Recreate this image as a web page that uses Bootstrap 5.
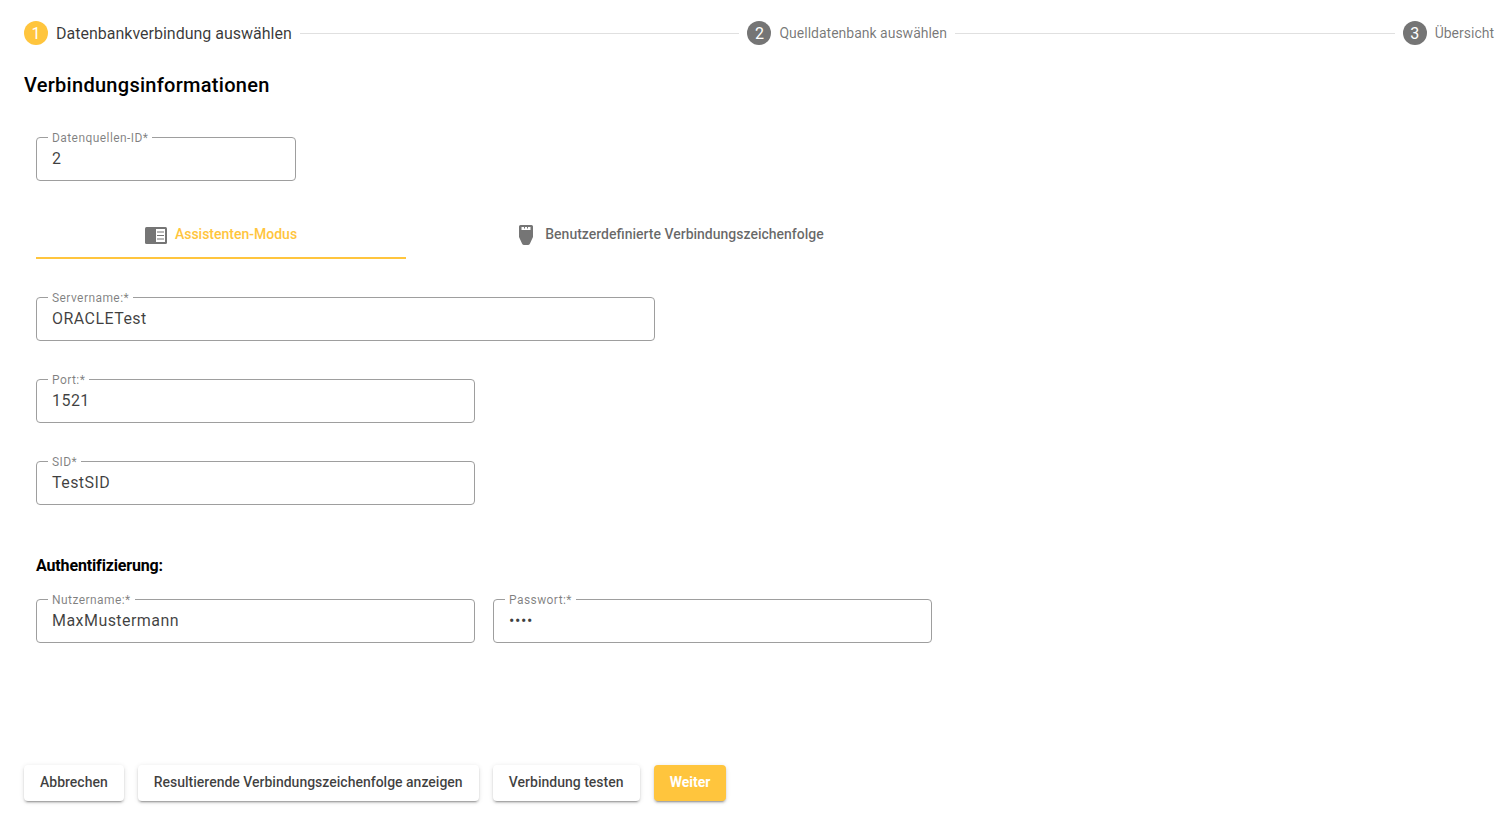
<!doctype html>
<html lang="de">
<head>
<meta charset="utf-8">
<title>Datenbankverbindung</title>
<link rel="stylesheet" href="https://cdn.jsdelivr.net/npm/bootstrap@5.3.0/dist/css/bootstrap.min.css">
<style>
html,body{height:100%;}
body{font-family:Roboto,"Liberation Sans",sans-serif;background:#fff;color:rgba(0,0,0,.87);font-size:14px;overflow:hidden;}
.app-shell{height:816px;padding:0 16px 15px 24px;}
.stepper{height:66px;}
.step-num{width:24px;height:24px;border-radius:50%;background:#757575;color:#fff;font-size:16px;line-height:25px;text-align:center;flex:none;}
.step-num-on{background:#ffc53d;}
.step-label{font-size:14px;color:rgba(0,0,0,.54);margin-left:8px;white-space:nowrap;}
.step-label-on{font-size:16px;line-height:24px;padding-top:1px;color:rgba(0,0,0,.78);}
.step-line{flex:1 1 auto;height:1px;background:rgba(0,0,0,.12);margin:0 8px;}
.sect-title{font-size:20px;font-weight:500;color:#000;line-height:24px;margin:7px 0 0;letter-spacing:.28px;}
.form-area{padding-left:12px;}
.field{position:relative;height:44px;border:1px solid #9e9e9e;border-radius:4px;padding:9px 15px 0;font-size:16px;line-height:24px;color:rgba(0,0,0,.75);letter-spacing:.45px;}
.field-label{position:absolute;top:-6px;left:11px;background:#fff;padding:0 4px;font-size:12px;line-height:13px;color:rgba(0,0,0,.5);letter-spacing:.43px;white-space:nowrap;}
.w-id{width:260px;margin-top:40px;}
.w-server{width:619px;margin-top:38px;}
.w-short{width:439px;}
.mt-gap{margin-top:38px;}
.tab-row{margin-top:27px;height:51px;}
.tab-item{width:370px;height:51px;font-size:14px;font-weight:500;color:rgba(0,0,0,.6);padding-top:2px;}
.tab-on{gap:8px;padding-top:4px;color:#ffc53d;border-bottom:2px solid #ffc53d;}
.tab-wide{width:530px;gap:12px;}
.doc-ico{margin-top:2px;}
.auth-title{font-size:16px;font-weight:700;color:#000;line-height:20px;margin:51px 0 0;letter-spacing:-.15px;}
.auth-row{margin-top:23px;gap:18px;}
.pw-dots{font-size:16px;letter-spacing:.6px;line-height:20px;}
.footer-bar{margin-top:122px;gap:14px;}
.act-btn{height:36px;padding:0 16px 1px;background:#fff;border:0;border-radius:4px;font-size:14px;font-weight:500;color:rgba(0,0,0,.75);box-shadow:0 3px 1px -2px rgba(0,0,0,.2),0 2px 2px 0 rgba(0,0,0,.14),0 1px 5px 0 rgba(0,0,0,.12);}
.act-test{width:147px;padding:0 0 1px;}
.act-primary{background:#ffc53d;color:#fff;font-weight:700;}
</style>
</head>
<body>
<div class="app-shell">
  <div class="stepper d-flex align-items-center">
    <div class="step-num step-num-on">1</div><div class="step-label step-label-on">Datenbankverbindung auswählen</div>
    <div class="step-line"></div>
    <div class="step-num">2</div><div class="step-label">Quelldatenbank auswählen</div>
    <div class="step-line"></div>
    <div class="step-num">3</div><div class="step-label">Übersicht</div>
  </div>
  <h2 class="sect-title">Verbindungsinformationen</h2>
  <div class="form-area">
    <div class="field w-id"><span class="field-label">Datenquellen-ID*</span>2</div>
    <div class="tab-row d-flex">
      <div class="tab-item tab-on d-flex align-items-center justify-content-center">
        <svg class="doc-ico" width="22" height="17" viewBox="0 0 22 17"><rect x="0" y="0" width="22" height="17" rx="1.500" fill="#757575"/><rect x="11" y="2" width="9" height="13" fill="#fff"/><path d="M12 5h7M12 8.500h7M12 12h7" stroke="#757575" stroke-width="1.200"/></svg>
        <span>Assistenten-Modus</span>
      </div>
      <div class="tab-item tab-wide d-flex align-items-center justify-content-center">
        <svg width="15" height="20" viewBox="-0.500 0 15 20"><path d="M2 0h11a1.500 1.500 0 0 1 1.500 1.500V12l-3 6.500a2 2 0 0 1-1.800 1.500H5.300a2 2 0 0 1-1.800-1.500L.5 12V1.500A1.500 1.500 0 0 1 2 0z" fill="#757575"/><path d="M3 2h9v3H3z" fill="#fff"/><path d="M6 2v1.500M9 2v1.500" stroke="#757575"/></svg>
        <span>Benutzerdefinierte Verbindungszeichenfolge</span>
      </div>
    </div>
    <div class="field w-server"><span class="field-label">Servername:*</span>ORACLETest</div>
    <div class="field w-short mt-gap"><span class="field-label">Port:*</span>1521</div>
    <div class="field w-short mt-gap"><span class="field-label">SID*</span>TestSID</div>
    <div class="auth-title">Authentifizierung:</div>
    <div class="auth-row d-flex">
      <div class="field w-short"><span class="field-label">Nutzername:*</span>MaxMustermann</div>
      <div class="field w-short"><span class="field-label">Passwort:*</span><span class="pw-dots">••••</span></div>
    </div>
  </div>
  <div class="footer-bar d-flex">
    <button class="act-btn" type="button">Abbrechen</button>
    <button class="act-btn" type="button">Resultierende Verbindungszeichenfolge anzeigen</button>
    <button class="act-btn act-test" type="button">Verbindung testen</button>
    <button class="act-btn act-primary" type="button">Weiter</button>
  </div>
</div>
</body>
</html>
